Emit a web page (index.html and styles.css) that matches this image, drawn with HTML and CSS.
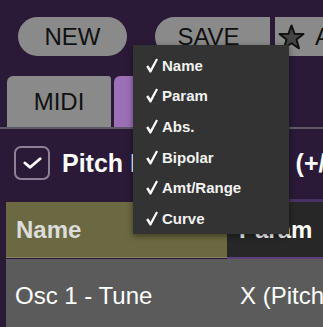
FILE: index.html
```html
<!DOCTYPE html>
<html>
<head>
<meta charset="utf-8">
<link rel="stylesheet" href="styles.css">
</head>
<body>
<div class="page">
  <div class="toolbar">
    <div class="btn pill">NEW</div>
    <div class="btn save">SAVE</div>
    <div class="btn fav">
      <svg class="star" viewBox="0 0 28 27" width="27" height="26"><path d="M14 1.5 L17.2 10.2 L26.5 10.4 L19.2 16.2 L21.8 25.3 L14 20 L6.2 25.3 L8.8 16.2 L1.5 10.4 L10.8 10.2 Z" fill="#444" stroke="#111" stroke-width="2" stroke-linejoin="round"/></svg>
      <span>AUTO</span>
    </div>
  </div>
  <div class="tabs">
    <div class="tab">MIDI</div>
    <div class="tab active">MOD</div>
  </div>
  <div class="panel">
    <div class="option">
      <div class="checkbox"><svg viewBox="0 0 20 12" width="19" height="12"><path d="M2 6 L7.5 10.5 L18 1.5" fill="none" stroke="#fff" stroke-width="3" stroke-linecap="round" stroke-linejoin="round"/></svg></div>
      <span class="label">Pitch Bend</span>
      <span class="label range">(+/- 2)</span>
    </div>
    <div class="table">
      <div class="thead">
        <div class="th th-name">Name</div>
        <div class="th th-param">Param</div>
      </div>
      <div class="trow">
        <div class="td">Osc 1 - Tune</div>
        <div class="td">X (Pitch)</div>
      </div>
    </div>
  </div>
</div>
<div class="menu">
  <div class="item"><svg class="chk" viewBox="0 0 14 16" width="14" height="15"><path d="M0.8 9.2 L2.9 7.6 L5.4 11.4 L11.4 0.6 L13.4 1.6 L6.1 15.4 L4.6 15.4 Z" fill="#fff"/></svg><span>Name</span></div>
  <div class="item"><svg class="chk" viewBox="0 0 14 16" width="14" height="15"><path d="M0.8 9.2 L2.9 7.6 L5.4 11.4 L11.4 0.6 L13.4 1.6 L6.1 15.4 L4.6 15.4 Z" fill="#fff"/></svg><span>Param</span></div>
  <div class="item"><svg class="chk" viewBox="0 0 14 16" width="14" height="15"><path d="M0.8 9.2 L2.9 7.6 L5.4 11.4 L11.4 0.6 L13.4 1.6 L6.1 15.4 L4.6 15.4 Z" fill="#fff"/></svg><span>Abs.</span></div>
  <div class="item"><svg class="chk" viewBox="0 0 14 16" width="14" height="15"><path d="M0.8 9.2 L2.9 7.6 L5.4 11.4 L11.4 0.6 L13.4 1.6 L6.1 15.4 L4.6 15.4 Z" fill="#fff"/></svg><span>Bipolar</span></div>
  <div class="item"><svg class="chk" viewBox="0 0 14 16" width="14" height="15"><path d="M0.8 9.2 L2.9 7.6 L5.4 11.4 L11.4 0.6 L13.4 1.6 L6.1 15.4 L4.6 15.4 Z" fill="#fff"/></svg><span>Amt/Range</span></div>
  <div class="item"><svg class="chk" viewBox="0 0 14 16" width="14" height="15"><path d="M0.8 9.2 L2.9 7.6 L5.4 11.4 L11.4 0.6 L13.4 1.6 L6.1 15.4 L4.6 15.4 Z" fill="#fff"/></svg><span>Curve</span></div>
</div>
</body>
</html>
```

FILE: styles.css
```css
html, body {
  margin: 0;
  width: 323px;
  height: 327px;
  overflow: hidden;
}
body {
  background: #2a1a37;
  font-family: "Liberation Sans", Arial, sans-serif;
  position: relative;
}
.page {
  white-space: nowrap;
}
.toolbar {
  display: flex;
  padding: 17px 0 0 18px;
}
.btn {
  flex: none;
  height: 39px;
  background: #8a8a8a;
  color: #111;
  font-size: 24px;
  display: flex;
  align-items: center;
  justify-content: center;
}
.pill {
  width: 109px;
  border-radius: 20px;
}
.save {
  width: 115px;
  margin-left: 28px;
  border-radius: 20px 0 0 20px;
  padding-right: 8px;
  box-sizing: border-box;
}
.fav {
  width: 110px;
  margin-left: 5px;
  justify-content: flex-start;
  padding-left: 3px;
  gap: 10px;
}
.star {
  display: block;
}
.tabs {
  display: flex;
  gap: 3px;
  margin-top: 20px;
  padding-left: 7px;
  height: 51px;
}
.tab {
  width: 104px;
  background: #8a8a8a;
  border-radius: 6px 3px 0 0;
  color: #111;
  font-size: 24px;
  display: flex;
  align-items: center;
  justify-content: center;
}
.tab.active {
  background: #9b70b6;
}
.panel {
  border-top: 2px solid #5f5868;
}
.option {
  display: flex;
  align-items: center;
  margin-top: 17px;
  padding-left: 14px;
  height: 34px;
}
.checkbox {
  width: 32px;
  height: 30px;
  border: 2px solid #8d8197;
  border-radius: 7px;
  display: flex;
  align-items: center;
  justify-content: center;
  flex: none;
}
.checkbox svg {
  display: block;
}
.label {
  margin-left: 12px;
  font-size: 25px;
  font-weight: bold;
  color: #fff;
}
.label.range {
  margin-left: 103px;
}
.table {
  margin-top: 22px;
  margin-left: 6px;
}
.thead, .trow {
  display: grid;
  grid-template-columns: 221px 1fr;
}
.th {
  height: 55px;
  display: flex;
  align-items: center;
  font-size: 24px;
  font-weight: bold;
  color: #dcdcdc;
}
.th-name {
  background: #6b6941;
  padding-left: 10px;
  border-bottom: 1px solid #85835f;
}
.th-param {
  background: #272727;
  padding-left: 12px;
  color: #fff;
  border-bottom: 2px solid #5e3f7d;
  box-shadow: 0 -3px 0 #4a3163;
}
.trow {
  background: #5b5b5b;
  height: 80px;
}
.td {
  font-size: 24px;
  color: #fff;
  padding: 23px 0 0 9px;
}
.td + .td {
  padding-left: 13px;
}
.menu {
  position: absolute;
  left: 133px;
  top: 45px;
  width: 156px;
  height: 189px;
  box-sizing: border-box;
  padding-top: 5px;
  background: #333;
  box-shadow: 0 2px 6px rgba(0, 0, 0, 0.45);
}
.item {
  height: 30.6px;
  display: flex;
  align-items: center;
  padding-left: 12px;
  gap: 3px;
  font-size: 15px;
  font-weight: bold;
  color: #f2f2f2;
}
.chk {
  display: block;
  flex: none;
}
```
